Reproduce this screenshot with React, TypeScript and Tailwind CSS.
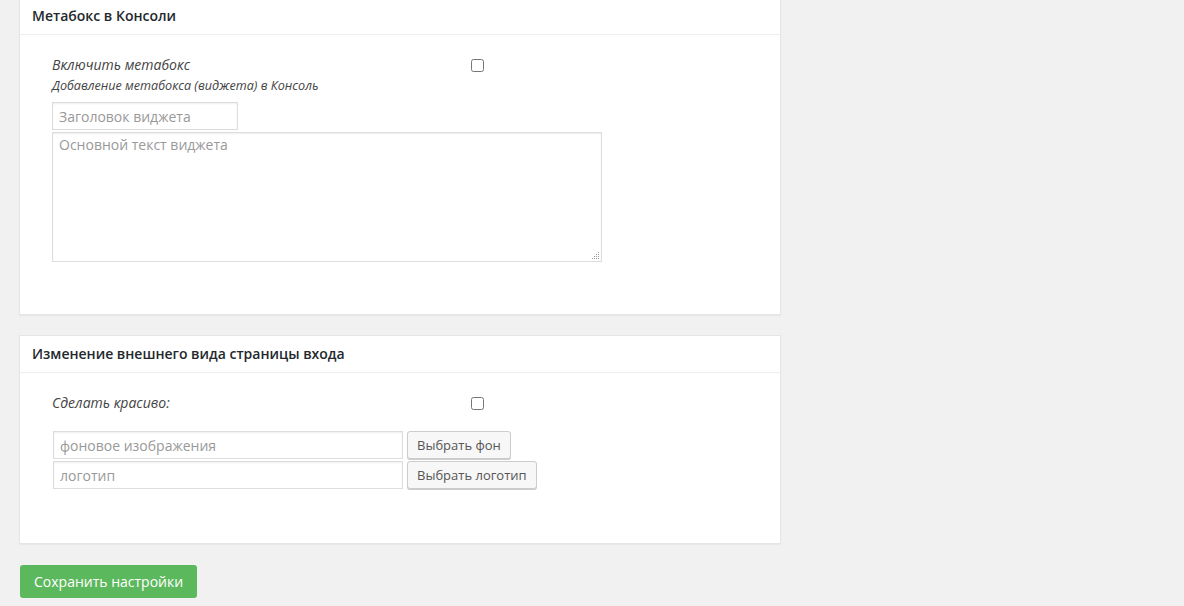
import React from 'react';

const font = { fontFamily: '"Open Sans", "Liberation Sans", sans-serif' };

const inputCls =
  'h-[28px] border border-[#ddd] bg-white px-[6px] text-[14px] text-[#32373c] placeholder:text-[#999] shadow-[inset_0_1px_2px_rgba(0,0,0,0.07)] outline-none';

const btnCls =
  'h-[28px] rounded-[3px] border border-[#ccc] bg-[#f7f7f7] px-[9px] text-[13px] leading-[26px] text-[#555] shadow-[0_1px_0_#ccc]';

const Panel = ({ title, className, children }: { title: string; className?: string; children: React.ReactNode }) => (
  <div className={`border border-[#e5e5e5] bg-white shadow-[0_1px_1px_rgba(0,0,0,0.04)] ${className ?? ''}`}>
    <h2 className="border-b border-[#eee] px-[12px] py-[8px] text-[14px] font-semibold leading-[20px] text-[#23282d]">
      {title}
    </h2>
    {children}
  </div>
);

const ToggleRow = ({ label }: { label: string }) => (
  <div className="flex h-[20px] items-center">
    <span className="w-[419px] text-[14px] italic leading-[20px] text-[#444]">{label}</span>
    <input type="checkbox" className="m-0 h-[13px] w-[13px]" />
  </div>
);

// dotted resize grip in the textarea corner
const Grip = () => (
  <svg className="pointer-events-none absolute bottom-[2px] right-[2px]" width="8" height="8" viewBox="0 0 8 8">
    {[
      [6, 0],
      [4, 2], [6, 2],
      [2, 4], [4, 4], [6, 4],
      [0, 6], [2, 6], [4, 6], [6, 6],
    ].map(([x, y]) => (
      <rect key={`${x}-${y}`} x={x} y={y} width="1" height="1" fill="#999" />
    ))}
  </svg>
);

export default function App() {
  return (
    <div className="min-h-screen overflow-hidden bg-[#f1f1f1] text-[#444]" style={font}>
      <div className="w-[781px] pl-[19px]">
        <Panel title="Метабокс в Консоли" className="-mt-[3px]">
          <div className="px-[32px] pb-[52px] pt-[20px]">
            <ToggleRow label="Включить метабокс" />
            <p className="mt-[2px] text-[12.6px] italic leading-[18px] text-[#444]">
              Добавление метабокса (виджета) в Консоль
            </p>
            <input className={`${inputCls} mt-[7px] block w-[186px]`} placeholder="Заголовок виджета" />
            <div className="relative mt-[2px] w-[550px]">
              <textarea
                className="block h-[130px] w-full resize-none border border-[#ddd] bg-white px-[6px] py-[2px] text-[14px] leading-[20px] text-[#32373c] placeholder:text-[#999] shadow-[inset_0_1px_2px_rgba(0,0,0,0.07)] outline-none"
                placeholder="Основной текст виджета"
              />
              <Grip />
            </div>
          </div>
        </Panel>

        <Panel title="Изменение внешнего вида страницы входа" className="mt-[20px]">
          <div className="px-[32px] pb-[54px] pt-[20px]">
            <ToggleRow label="Сделать красиво:" />
            <div className="mt-[18px] flex flex-col gap-[2px] pl-[1px]">
              <div className="flex items-center gap-[4px]">
                <input className={`${inputCls} w-[350px]`} placeholder="фоновое изображения" />
                <button className={btnCls}>Выбрать фон</button>
              </div>
              <div className="flex items-center gap-[4px]">
                <input className={`${inputCls} w-[350px]`} placeholder="логотип" />
                <button className={btnCls}>Выбрать логотип</button>
              </div>
            </div>
          </div>
        </Panel>

        <button className="ml-[1px] mt-[21px] h-[33px] rounded-[3px] bg-[#5cb85c] px-[14px] text-[14px] text-white">
          Сохранить настройки
        </button>
      </div>
    </div>
  );
}
